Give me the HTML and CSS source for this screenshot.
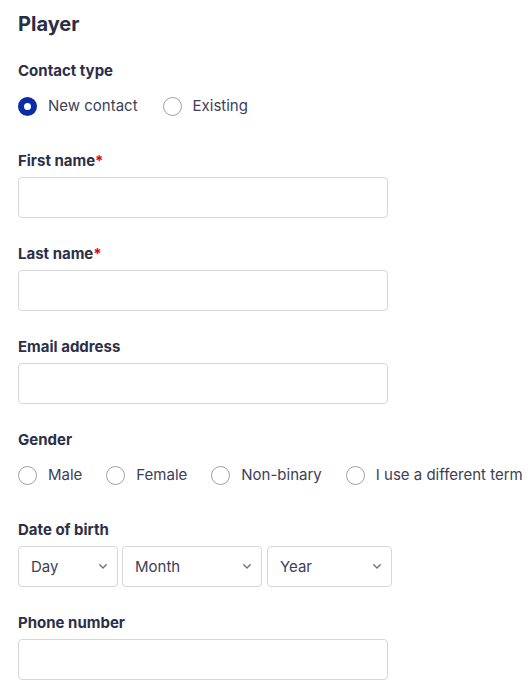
FILE: index.html
```html
<!DOCTYPE html>
<html lang="en">
<head>
<meta charset="utf-8">
<title>Player</title>
<link rel="stylesheet" href="styles.css">
</head>
<body>
<form class="form">
  <h1 class="title">Player</h1>

  <div class="field field-radio">
    <div class="label">Contact type</div>
    <div class="radios">
      <label class="radio"><span class="dot checked"></span><span>New contact</span></label>
      <label class="radio"><span class="dot"></span><span>Existing</span></label>
    </div>
  </div>

  <div class="field">
    <div class="label">First name<span class="req">*</span></div>
    <div class="input"></div>
  </div>

  <div class="field">
    <div class="label">Last name<span class="req">*</span></div>
    <div class="input"></div>
  </div>

  <div class="field">
    <div class="label">Email address</div>
    <div class="input"></div>
  </div>

  <div class="field field-radio">
    <div class="label">Gender</div>
    <div class="radios radios-tight">
      <label class="radio"><span class="dot"></span><span>Male</span></label>
      <label class="radio"><span class="dot"></span><span>Female</span></label>
      <label class="radio"><span class="dot"></span><span>Non-binary</span></label>
      <label class="radio"><span class="dot"></span><span>I use a different term</span></label>
    </div>
  </div>

  <div class="field">
    <div class="label">Date of birth</div>
    <div class="selects">
      <div class="select select-day"><span>Day</span><svg class="chev" width="8" height="5" viewBox="0 0 8 5"><path d="M0.8 0.8 L4 4 L7.2 0.8" fill="none" stroke="#6e7183" stroke-width="1.4" stroke-linecap="round" stroke-linejoin="round"/></svg></div>
      <div class="select select-month"><span>Month</span><svg class="chev" width="8" height="5" viewBox="0 0 8 5"><path d="M0.8 0.8 L4 4 L7.2 0.8" fill="none" stroke="#6e7183" stroke-width="1.4" stroke-linecap="round" stroke-linejoin="round"/></svg></div>
      <div class="select select-year"><span>Year</span><svg class="chev" width="8" height="5" viewBox="0 0 8 5"><path d="M0.8 0.8 L4 4 L7.2 0.8" fill="none" stroke="#6e7183" stroke-width="1.4" stroke-linecap="round" stroke-linejoin="round"/></svg></div>
    </div>
  </div>

  <div class="field">
    <div class="label">Phone number</div>
    <div class="input"></div>
  </div>
</form>
</body>
</html>
```

FILE: styles.css
```css
* { box-sizing: border-box; }

html, body {
  margin: 0;
  padding: 0;
  background: #ffffff;
}

body {
  font-family: Inter, "Noto Sans", "Liberation Sans", sans-serif;
  color: #2c2f47;
  overflow: hidden;
}

.form {
  padding: 12px 0 0 18px;
}

.title {
  margin: 0 0 25px 0;
  font-size: 20px;
  line-height: 24px;
  font-weight: 700;
  color: #2a2d45;
}

.field {
  margin-bottom: 26px;
}

.field-radio {
  margin-bottom: 35px;
}

.label {
  font-size: 15px;
  line-height: 20px;
  font-weight: 700;
  color: #2c2f47;
  margin-bottom: 6px;
}

.field-radio .label {
  margin-bottom: 15px;
}

.req {
  color: #e3001b;
}

.radios {
  display: flex;
  align-items: center;
  gap: 25px;
  height: 20px;
}

.radios-tight {
  gap: 24px;
}

.radio {
  display: flex;
  align-items: center;
  gap: 11px;
  font-size: 15px;
  line-height: 20px;
  color: #3d4055;
  white-space: nowrap;
}

.dot {
  width: 19px;
  height: 19px;
  border-radius: 50%;
  border: 1px solid #9d9fab;
  background: #fff;
  flex: none;
}

.dot.checked {
  border: 6px solid #0a2ca6;
  background: #ffffff;
}

.input {
  width: 370px;
  height: 41px;
  border: 1px solid #d7d7db;
  border-radius: 4px;
  background: #fff;
}

.selects {
  display: flex;
  gap: 4px;
}

.select {
  height: 41px;
  border: 1px solid #d7d7db;
  border-radius: 4px;
  display: flex;
  align-items: center;
  justify-content: space-between;
  padding: 0 10px 0 12px;
  font-size: 15px;
  color: #3d4055;
}

.select-day { width: 100px; }
.select-month { width: 140px; }
.select-year { width: 125px; margin-left: 1px; }

.chev {
  display: block;
}
```
